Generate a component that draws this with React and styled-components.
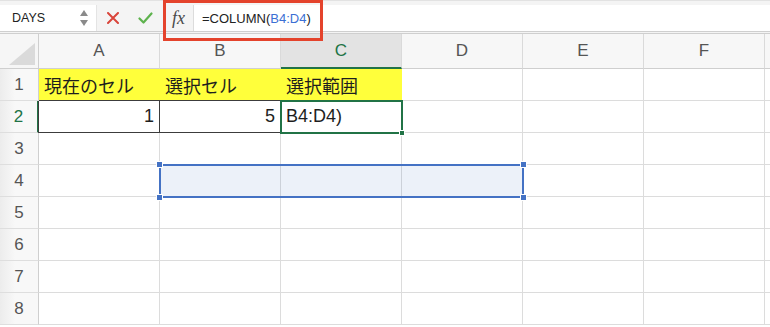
import React from "react";
import styled, { createGlobalStyle } from "styled-components";

const Global = createGlobalStyle`
  html, body { margin: 0; padding: 0; background: #fff; }
  body { font-family: "Liberation Sans", "Noto Sans CJK JP", sans-serif; }
  * { box-sizing: border-box; }
`;

const ROW_HEADER_W = 39;
const COL_W = 121;
const HEAD_H = 35;
const ROW_H = 32;

const Window = styled.div`
  position: relative;
  width: 770px;
  height: 327px;
  overflow: hidden;
  background: #fff;
`;

const Toolbar = styled.div`
  display: flex;
  align-items: stretch;
  height: 34px;
  padding-top: 4px;
  background: #f4f4f4;
  border-top: 1px solid #e2e2e2;
  border-bottom: 3px double #cfcfcf;
`;

const NameBox = styled.div`
  display: flex;
  align-items: center;
  width: 97px;
  height: 26px;
  padding-left: 12px;
  background: #fff;
  border-right: 1px solid #e4e4e4;
  font-size: 12.5px;
  color: #222;
`;

const Spinner = styled.svg`
  margin-left: auto;
  margin-right: 7px;
`;

const Actions = styled.div`
  display: flex;
  align-items: center;
  width: 66px;
  height: 26px;
  padding-left: 10px;
  gap: 19px;
`;

const FxLabel = styled.div`
  display: flex;
  align-items: center;
  width: 30px;
  height: 26px;
  padding-left: 9px;
  font-family: "Liberation Serif", "DejaVu Serif", serif;
  font-style: italic;
  font-size: 18px;
  color: #4a4a4a;
`;

const FormulaInput = styled.div`
  flex: 1;
  display: flex;
  align-items: center;
  height: 26px;
  padding-left: 8px;
  background: #fff;
  border-left: 1px solid #dcdcdc;
  font-size: 13px;
  color: #222;
`;

const RefText = styled.span`
  color: #3b6fd4;
`;

const RedFrame = styled.div`
  position: absolute;
  left: 163px;
  top: 0;
  width: 160px;
  height: 41px;
  border: 3px solid #e4432c;
  pointer-events: none;
`;

const Sheet = styled.div`
  position: relative;
  display: grid;
  grid-template-columns: ${ROW_HEADER_W}px repeat(6, ${COL_W}px) 1fr;
  grid-template-rows: ${HEAD_H}px repeat(8, ${ROW_H}px);
`;

const Corner = styled.div`
  position: relative;
  background: #f6f6f6;
  border-right: 1px solid #cfcfcf;
  border-bottom: 1px solid #cfcfcf;
  display: flex;
  align-items: flex-end;
  justify-content: flex-end;
  padding: 0 3px 3px 0;
`;

const ColHead = styled.div`
  display: flex;
  align-items: center;
  justify-content: center;
  background: ${(p) => (p.$active ? "#e3e3e3" : "#f7f7f7")};
  border-right: 1px solid #dadada;
  border-bottom: ${(p) => (p.$active ? "2px solid #217346" : "1px solid #cfcfcf")};
  color: ${(p) => (p.$active ? "#217346" : "#555")};
  font-size: 17px;
  padding-top: ${(p) => (p.$active ? "1px" : "0")};
`;

const RowHead = styled.div`
  display: flex;
  align-items: center;
  justify-content: center;
  background: linear-gradient(to right, #ececec, #f8f8f8 40%, #f8f8f8);
  border-right: ${(p) => (p.$active ? "2px solid #217346" : "1px solid #cfcfcf")};
  border-bottom: 1px solid #dedede;
  color: ${(p) => (p.$active ? "#217346" : "#555")};
  font-size: 17px;
`;

const Cell = styled.div`
  display: flex;
  align-items: center;
  justify-content: ${(p) => (p.$align === "right" ? "flex-end" : "flex-start")};
  padding: 0 5px;
  background: ${(p) => p.$fill || "#fff"};
  border-right: 1px solid ${(p) => (p.$boxed ? "#3c3c3c" : p.$fill || "#dcdcdc")};
  border-bottom: 1px solid ${(p) => (p.$boxed ? "#3c3c3c" : p.$fill ? "#dcdcdc" : "#dcdcdc")};
  box-shadow: ${(p) => (p.$boxed ? "0 -1px 0 #3c3c3c, -1px 0 0 #3c3c3c" : "none")};
  font-family: "Liberation Sans", "Noto Sans CJK JP", sans-serif;
  font-size: 18px;
  color: #1e1e1e;
  white-space: nowrap;
  overflow: visible;
`;

const Filler = styled.div`
  background: ${(p) => (p.$head ? "#f7f7f7" : "#fff")};
  border-bottom: 1px solid ${(p) => (p.$head ? "#cfcfcf" : "#dcdcdc")};
`;

const ActiveBox = styled.div`
  position: absolute;
  border: 2px solid #217346;
  pointer-events: none;
`;

const FillHandle = styled.div`
  position: absolute;
  right: -4px;
  bottom: -4px;
  width: 6px;
  height: 6px;
  background: #217346;
  border: 1px solid #fff;
`;

const RangeBox = styled.div`
  position: absolute;
  border: 2px solid #4472c4;
  background: rgba(68, 114, 196, 0.1);
  pointer-events: none;
`;

const RangeHandle = styled.div`
  position: absolute;
  width: 7px;
  height: 7px;
  background: #4472c4;
  border: 1px solid #fff;
  ${(p) => (p.$top ? "top: -5px;" : "bottom: -5px;")}
  ${(p) => (p.$left ? "left: -5px;" : "right: -5px;")}
`;

const COLS = ["A", "B", "C", "D", "E", "F"];
const YELLOW = "#ffff3b";

const DATA = {
  1: {
    A: { v: "現在のセル", fill: YELLOW },
    B: { v: "選択セル", fill: YELLOW },
    C: { v: "選択範囲", fill: YELLOW },
  },
  2: {
    A: { v: "1", align: "right", boxed: true },
    B: { v: "5", align: "right", boxed: true },
    C: { v: "B4:D4)" },
  },
};

const colX = (i) => ROW_HEADER_W + i * COL_W - 1;
const rowY = (r) => HEAD_H + (r - 1) * ROW_H - 1;

export default function App() {
  return (
    <Window>
      <Global />
      <Toolbar>
        <NameBox>
          DAYS
          <Spinner width="10" height="20" viewBox="0 0 10 20">
            <path d="M5 2 L9 8 L1 8 Z" fill="#8a8a8a" />
            <path d="M5 18 L9 12 L1 12 Z" fill="#8a8a8a" />
          </Spinner>
        </NameBox>
        <Actions>
          <svg width="12" height="12" viewBox="0 0 12 12">
            <path d="M1 1 L11 11 M11 1 L1 11" stroke="#d9453b" strokeWidth="2" strokeLinecap="round" />
          </svg>
          <svg width="15" height="12" viewBox="0 0 15 12">
            <path d="M1.5 6.5 L5.5 10.5 L13.5 1.5" stroke="#5db24d" strokeWidth="2.2" fill="none" strokeLinecap="round" strokeLinejoin="round" />
          </svg>
        </Actions>
        <FxLabel>fx</FxLabel>
        <FormulaInput>
          =COLUMN(<RefText>B4:D4</RefText>)
        </FormulaInput>
      </Toolbar>

      <Sheet>
        <Corner>
          <svg width="26" height="22" viewBox="0 0 26 22">
            <path d="M26 0 L26 22 L0 22 Z" fill="#dadada" />
          </svg>
        </Corner>
        {COLS.map((c) => (
          <ColHead key={c} $active={c === "C"}>
            {c}
          </ColHead>
        ))}
        <Filler $head />
        {Array.from({ length: 8 }, (_, i) => i + 1).map((r) => (
          <React.Fragment key={r}>
            <RowHead $active={r === 2}>{r}</RowHead>
            {COLS.map((c) => {
              const d = (DATA[r] && DATA[r][c]) || {};
              return (
                <Cell key={c} $fill={d.fill} $align={d.align} $boxed={d.boxed}>
                  {d.v}
                </Cell>
              );
            })}
            <Filler />
          </React.Fragment>
        ))}

        <ActiveBox
          style={{ left: colX(2), top: rowY(2), width: COL_W + 2, height: ROW_H + 2 }}
        >
          <FillHandle />
        </ActiveBox>

        <RangeBox
          style={{ left: colX(1), top: rowY(4), width: COL_W * 3 + 2, height: ROW_H + 2 }}
        >
          <RangeHandle $top $left />
          <RangeHandle $top />
          <RangeHandle $left />
          <RangeHandle />
        </RangeBox>
      </Sheet>

      <RedFrame />
    </Window>
  );
}
